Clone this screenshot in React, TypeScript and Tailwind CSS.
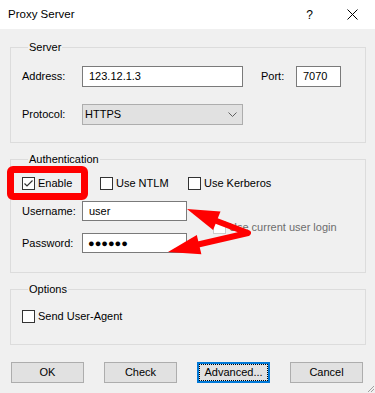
import { ReactNode } from 'react'

function Check({ checked, disabled }: { checked?: boolean; disabled?: boolean }) {
  return (
    <span
      className={`relative inline-block w-[13px] h-[13px] shrink-0 border bg-white ${disabled ? 'border-[#cccccc]' : 'border-[#333333]'}`}
    >
      {checked && (
        <svg className="absolute left-0 top-0" width="11" height="11" viewBox="0 0 11 11">
          <path d="M1.5 5.5 L4 8 L9.5 2.5" fill="none" stroke="#333" strokeWidth="1.2" />
        </svg>
      )}
    </span>
  )
}

function Group({ title, children, className }: { title: string; children: ReactNode; className?: string }) {
  return (
    <fieldset className={`ml-[10px] w-[356px] border border-[#dcdcdc] ${className ?? ''}`}>
      <legend className="ml-[6px] px-[1px] leading-[14px]">{title}</legend>
      {children}
    </fieldset>
  )
}

function Btn({ children, focused }: { children: ReactNode; focused?: boolean }) {
  if (focused) {
    return (
      <button className="w-[73px] h-[21px] bg-[#e1e1e1] border-2 border-[#0078d7] p-0 flex">
        <span className="flex-1 flex items-center justify-center outline-1 outline-dotted outline-black -outline-offset-1">
          {children}
        </span>
      </button>
    )
  }
  return (
    <button className="w-[73px] h-[21px] bg-[#e1e1e1] border border-[#adadad] flex items-center justify-center">
      {children}
    </button>
  )
}

export default function App() {
  return (
    <div className="relative w-[375px] h-[393px] bg-[#f0f0f0] overflow-hidden text-[11px] text-black font-['Liberation_Sans',Arial,sans-serif]">
      {/* title bar */}
      <div className="h-[29px] bg-white flex items-center pl-[8px]">
        <span className="text-[11.5px] flex-1">Proxy Server</span>
        <span className="text-[12px] mr-[34px]">?</span>
        <svg className="mr-[17px]" width="11" height="11" viewBox="0 0 11 11">
          <path d="M0.5 0.5 L10.5 10.5 M10.5 0.5 L0.5 10.5" stroke="#000" strokeWidth="1" />
        </svg>
      </div>

      <Group title="Server" className="mt-[11px] pt-[12px] pb-[17px] pl-[11px]">
        <div className="flex items-center h-[21px]">
          <span className="w-[60px]">Address:</span>
          <div className="w-[161px] h-[21px] bg-white border border-[#7a7a7a] flex items-center px-[6px]">123.12.1.3</div>
          <span className="ml-[18px] w-[35px]">Port:</span>
          <div className="w-[45px] h-[21px] bg-white border border-[#7a7a7a] flex items-center px-[6px]">7070</div>
        </div>
        <div className="flex items-center h-[21px] mt-[17px]">
          <span className="w-[60px]">Protocol:</span>
          <div className="w-[161px] h-[21px] bg-[#e1e1e1] border border-[#adadad] flex items-center pl-[2px] pr-[5px]">
            <span className="flex-1">HTTPS</span>
            <svg width="9" height="6" viewBox="0 0 9 6">
              <path d="M0.5 0.5 L4.5 4.5 L8.5 0.5" fill="none" stroke="#606060" strokeWidth="1" />
            </svg>
          </div>
        </div>
      </Group>

      <Group title="Authentication" className="mt-[9px] pt-[10px] pb-[19px] pl-[11px]">
        <div className="flex items-center h-[14px]">
          <label className="flex items-center gap-[3px] w-[78px]">
            <Check checked />
            Enable
          </label>
          <label className="flex items-center gap-[3px] w-[88px]">
            <Check />
            Use NTLM
          </label>
          <label className="flex items-center gap-[3px]">
            <Check />
            Use Kerberos
          </label>
        </div>
        <div className="flex items-center mt-[11px]">
          <div className="flex flex-col gap-[12px]">
            <div className="flex items-center h-[20px]">
              <span className="w-[60px]">Username:</span>
              <div className="w-[105px] h-[20px] bg-white border border-[#7a7a7a] flex items-center px-[6px]">user</div>
            </div>
            <div className="flex items-center h-[20px]">
              <span className="w-[60px]">Password:</span>
              <div className="w-[105px] h-[20px] bg-white border border-[#7a7a7a] flex items-center pl-[5px] text-[11px] leading-none">
                ●●●●●●
              </div>
            </div>
          </div>
          <label className="ml-[26px] flex items-center gap-[3px] text-[#6d6d6d]">
            <Check disabled />
            Use current user login
          </label>
        </div>
      </Group>

      <Group title="Options" className="mt-[9px] pt-[13px] pb-[21px] pl-[11px]">
        <label className="flex items-center gap-[3px] h-[14px]">
          <Check />
          Send User-Agent
        </label>
      </Group>

      <div className="flex gap-[20px] pl-[11px] mt-[17px]">
        <Btn>OK</Btn>
        <Btn>Check</Btn>
        <Btn focused>Advanced...</Btn>
        <Btn>Cancel</Btn>
      </div>

      {/* resize grip */}
      <svg className="absolute right-0 bottom-0" width="10" height="10" viewBox="0 0 10 10">
        <path d="M9 3 L3 9 M9 6 L6 9" stroke="#a0a0a0" strokeWidth="1" />
      </svg>

      {/* red annotations */}
      <div className="absolute left-[7px] top-[166px] w-[81px] h-[34px] border-[7px] border-[#ff0000] rounded-[6px]" />
      <svg className="absolute left-0 top-0 pointer-events-none" width="375" height="393" viewBox="0 0 375 393">
        <polyline points="214,220 248,233 196,245" fill="none" stroke="#ff0000" strokeWidth="6" strokeLinejoin="round" strokeLinecap="round" />
        <polygon points="187,209 220.5,211.4 213.1,230" fill="#ff0000" />
        <polygon points="168,252 201.4,254.3 196.8,234.9" fill="#ff0000" />
      </svg>
    </div>
  )
}
